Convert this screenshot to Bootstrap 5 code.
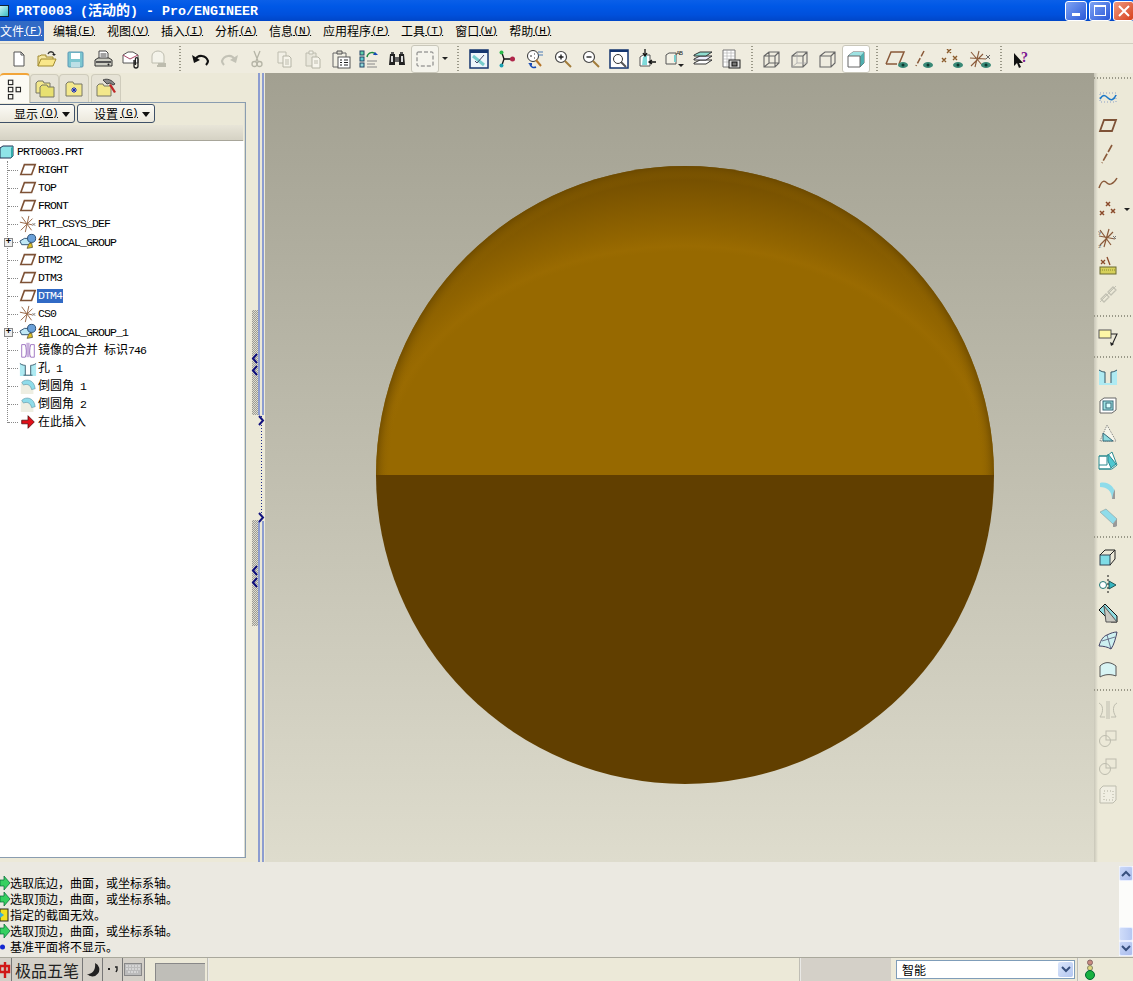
<!DOCTYPE html>
<html lang="zh">
<head>
<meta charset="utf-8">
<title>PRT0003</title>
<link href="https://cdn.jsdelivr.net/npm/bootstrap@5.3.0/dist/css/bootstrap.min.css" rel="stylesheet">
<style>
html,body{margin:0;height:981px;width:1133px;overflow:hidden;background:#ece9d8}
body{font-family:"Liberation Mono","Noto Sans CJK SC",monospace;font-size:11.5px;letter-spacing:-.9px;line-height:1;color:#000}
.cj{font-family:"Noto Sans CJK SC",sans-serif;font-size:12px;letter-spacing:0}
.app-shell{width:1133px;height:981px}
.ttl{height:21px;background:linear-gradient(#0a5fe8,#0058e6 30%,#0050dc 70%,#0046c8);color:#fff;font-weight:700;font-size:13.33px;letter-spacing:0;padding-left:1px}
.ttl .cj{font-size:14px}
.ttl-ico{width:12px;height:12px;margin:0 3px 0 -4px;background:linear-gradient(135deg,#d7fbfb,#39bcc2);border:1px solid #123}
.wb{width:22px;height:20px;border:1px solid #fff;border-radius:3px;background:linear-gradient(135deg,#7ea3f3,#2a58d8);margin-left:2px}
.wb.cl{background:linear-gradient(135deg,#ee9a80,#d8401c);width:21px;margin-right:-1px}
.mnu{height:22px;background:#efecdf}
.mi{padding:0 6px;height:20px}
.mi.on{background:#316ac5;color:#fff;padding:0 2px 0 0;margin-right:3px}
.mp{display:inline-block;width:18px;font-size:11px;letter-spacing:-.6px;text-decoration:underline;text-underline-offset:1px;text-align:center}
.tb{height:30px;background:#efecdf;border-top:1px solid #d2cfc0;padding-left:5px}
.sl{width:28px;height:28px;flex:none}
.sl svg{width:20px;height:20px;display:block}
.sl.wd svg{width:24px}
.sl.act{background:#fff;border:1px solid #c9c7ba;border-radius:3px}
.sl.act.pale{background:#f5f4ec}
.ddr{width:12px;height:28px;flex:none}
.ddr i{border:3px solid transparent;border-top:3px solid #222;border-bottom:0;display:block}
.rdd{position:absolute;left:30px;top:12px;border:3px solid transparent;border-top:3px solid #222;border-bottom:0}
.sp{flex:none;height:26px;position:relative}
.sp:after{content:"";display:block;margin:0 auto;width:2px;height:26px;background:repeating-linear-gradient(#9a9888 0 1px,transparent 1px 3px)}
.w14{width:14px}.w13{width:13px}.w12{width:12px}
.mainrow{height:789px}
.lft{width:247px;background:#ece9d8}
.tabs{height:29px}
.tab{height:28px;margin-top:1px;border:1px solid #cfccbc;border-bottom:0;border-radius:4px 4px 0 0;background:#e6e3d6}
.tab svg{width:22px;height:22px}
.tab.on{background:#fbfaf4;border-top:2px solid #f2a53a;height:30px;margin-top:0;width:30px;border-left:0;position:relative;z-index:2}
.pnl{height:756px;border:solid #8a9db0;border-width:1px 1px 1px 0;box-shadow:inset -1px 0 0 #dcdccf;background:#ece9d8;width:246px}
.bts{height:21px;padding-top:1px;gap:2px}
.bt{height:19px;border:1px solid #3e5068;border-radius:3px;background:linear-gradient(#fbfaf5,#ebe8dc);padding-right:4px}
.bt i{border:4px solid transparent;border-top:5px solid #111;border-bottom:0;display:block;margin-left:4px;margin-top:1px}
.bt1{width:83px;margin-left:-8px}.bt2{width:78px}
.gbar{height:16px;margin-top:1px;background:linear-gradient(#e8e5d8,#d5d2c4);border-bottom:1px solid #a8a69a;margin-right:2px}
.tree{background:#fff;flex:1;margin-right:1px;position:relative;padding-top:2px}
.rw{height:18px;position:relative}
.rw svg{width:18px;height:18px;flex:none}
.rootrow svg{width:14px;height:14px;margin-right:3px}
.kids{margin-left:7px;border-left:1px dotted #888;height:262px}
.cn{width:10px;border-top:1px dotted #888;flex:none;margin-right:1px}
.lb{padding:1px;white-space:pre}
.lb.sel{background:#316ac5;color:#fff}
.pm{position:absolute;left:-4px;top:5px;width:9px;height:9px;border:1px solid #8a8a8a;background:#eee;font-size:9px;line-height:7px;text-align:center;color:#000;font-weight:700;letter-spacing:0}
.spl{width:18px;background:#ece9d8;position:relative}
.grp{position:absolute;left:5px;width:6px;background:repeating-conic-gradient(#9c9c94 0 25%,#dedcd0 0 50%) 0 0/2px 2px}
.lnv{position:absolute;top:0;bottom:0;width:2px;background:#8d9dd0}
.dot-v{position:absolute;left:14px;top:343px;height:104px;width:1px;background:repeating-linear-gradient(#1a2a8a 0 1px,transparent 1px 3px)}
.lnv.a{left:11px}.lnv.b{left:15px}
.cvr{position:absolute;width:7px;height:11px;fill:none;stroke:#12127e;stroke-width:2}
.gapln{position:absolute;top:342px;height:106px;left:10px;width:8px;background:#ece9d8}
.cvs{width:829px;background:linear-gradient(#a2a091,#dedccd);position:relative}
.cvs svg{position:absolute;left:0;top:0;width:829px;height:789px}
.rtb{width:39px;background:linear-gradient(90deg,#c8c6b8,#ece9d8 4px);padding-top:4px}
.rsp{width:100%;background:repeating-linear-gradient(90deg,#9a9888 0 1px,transparent 1px 3px);height:2px}
.rtop{margin-bottom:5px}
.rs{height:15px;width:100%}.rs.t{height:12px}.rs.u{height:13px}
.msg{height:95px;background:#ebe9e1;position:relative;padding-top:13px}
.ml{height:16px;white-space:nowrap}
.ml svg{width:10px;height:14px;flex:none}
.sb{position:absolute;right:0;top:4px;width:14px;height:90px;background:#fcfcfa}
.sbb{height:15px;background:linear-gradient(135deg,#cad8f8,#aabcec);border:1px solid #e8eeff;border-radius:2px}
.sbb svg{width:10px;height:7px}
.sbt{height:14px;margin-top:auto;background:linear-gradient(90deg,#cfdcf9,#b6c8f2);border:1px solid #e8eeff;border-radius:2px}
.stt{height:24px;background:#ece9d8;border-top:1px solid #a9a89c}
.ime{width:145px;background:#d4d0c8;border-right:1px solid #888;height:23px}
.ime>div{border-right:1px solid #777;height:23px}
.imen{font-family:"Noto Sans CJK SC",sans-serif;font-size:16px;letter-spacing:0;color:#222;width:71px;padding-left:3px}
.ic1{width:12px}.ic2{width:20px}.ime>.ic3{width:20px;border-right:0}
.stbox{width:50px;height:18px;background:#bfbeb8;border-left:1px solid #888;border-top:1px solid #888;margin:5px 0 0 10px}
.vl{width:2px;height:23px;background:linear-gradient(90deg,#aaa89c,#fff);margin-left:2px}
.vl.nom{margin-left:0}
.sgr{width:90px;height:23px;background:#d4d0c8}
.cbo{width:179px;height:19px;margin-left:5px;margin-top:2px;border:1px solid #7f9db9;background:#fff;padding-left:5px}
.cbd{width:15px;height:15px;margin:1px;background:linear-gradient(135deg,#dbe6fb,#b3c6f0);border-radius:2px}
.cbd svg{width:10px;height:7px}
.lgt{width:54px;padding-left:5px}
.lgt svg{width:12px;height:22px}
</style>
</head>
<body>
<svg width="0" height="0" style="position:absolute">
<defs>
<symbol id="new" viewBox="0 0 20 20"><path d="M5 3h7l3 3v11H5z" fill="#fff" stroke="#555"/><path d="M12 3v3h3" fill="none" stroke="#555"/></symbol>
<symbol id="open" viewBox="0 0 20 20"><path d="M1 17V7h2l1-1h5v2h7v2" fill="#f5e7a0" stroke="#a08a30"/><path d="M1 17l3-7h15l-3 7z" fill="#f9e78a" stroke="#a08a30"/><path d="M11 5c1-3 5-3 6 0" fill="none" stroke="#333" stroke-width="1.300"/><path d="M15 5h4l-2 2z" fill="#222"/></symbol>
<symbol id="save" viewBox="0 0 20 20"><rect x="3" y="3" width="15" height="15" rx="1" fill="#7cc6d0" stroke="#5a98b5"/><rect x="6" y="4" width="9" height="6" fill="#fff"/><rect x="6" y="13" width="9" height="5" fill="#bcdfe6"/></symbol>
<symbol id="print" viewBox="0 0 20 20"><path d="M6 2h7l2 2v6H6z" fill="#fff" stroke="#444"/><path d="M7.500 5h6M7.500 7h6" stroke="#444"/><path d="M2 11l3-2h11l3 2v6H2z" fill="#cfcfc4" stroke="#333"/><rect x="3" y="12" width="15" height="2" fill="#555"/><circle cx="15.500" cy="15.500" r="1" fill="#222"/></symbol>
<symbol id="mail" viewBox="0 0 20 20"><path d="M2 6l5-3h5l5 3v8H2z" fill="#fff" stroke="#555"/><path d="M2 6l7 4 8-4" fill="none" stroke="#a46"/><path d="M13 11v6a2 2 0 0 0 4 0V10a1.300 1.300 0 0 0-2.600 0v6" fill="none" stroke="#222" stroke-width="1.300"/></symbol>
<symbol id="mail2" viewBox="0 0 20 20"><path d="M3 7a6 5 0 0 1 12 0v7H3z" fill="#f4f3ea" stroke="#bdbcae"/><path d="M9 15h8M8 17h9" stroke="#bdbcae" stroke-width="2"/></symbol>
<symbol id="undo" viewBox="0 0 20 20"><path d="M4 11c3-6 11-5 13 1 0 2-1 3-2 4" fill="none" stroke="#111" stroke-width="2.200"/><path d="M1 6l2 8 6-3z" fill="#111"/></symbol>
<symbol id="redo" viewBox="0 0 20 20"><path d="M16 11c-3-6-11-5-13 1 0 2 1 3 2 4" fill="none" stroke="#c3c2b6" stroke-width="2.200"/><path d="M19 6l-2 8-6-3z" fill="#c3c2b6"/></symbol>
<symbol id="cut" viewBox="0 0 20 20"><path d="M7 2l4 10M13 2L9 12" stroke="#b5b4a6" stroke-width="1.300" fill="none"/><circle cx="7.500" cy="15" r="2.500" fill="none" stroke="#b5b4a6" stroke-width="1.300"/><circle cx="12.500" cy="15" r="2.500" fill="none" stroke="#b5b4a6" stroke-width="1.300"/></symbol>
<symbol id="copy" viewBox="0 0 20 20"><path d="M3 3h8v11H3z" fill="#f2f0e6" stroke="#bdbcae"/><path d="M8 7h6l2 2v9H8z" fill="#f6f4ea" stroke="#b5b4a6"/><path d="M10 11h4M10 13h4M10 15h4" stroke="#bdbcae"/></symbol>
<symbol id="paste" viewBox="0 0 20 20"><path d="M3 4h10v13H3z" fill="#e8e6da" stroke="#bdbcae"/><path d="M6 2h4v3H6z" fill="#f4f3ea" stroke="#bdbcae"/><path d="M9 8h6l2 2v9H9z" fill="#f7f5ec" stroke="#b5b4a6"/><path d="M11 12h4M11 14h4" stroke="#bdbcae"/></symbol>
<symbol id="plist" viewBox="0 0 20 20"><path d="M2 4h13v14H2z" fill="#f2f0e4" stroke="#666"/><path d="M6 2h5v3H6z" fill="#dad8cc" stroke="#555"/><rect x="7" y="8" width="12" height="11" fill="#fff" stroke="#555"/><path d="M9 11h2M9 13.500h2M9 16h2M13 11h4M13 13.500h4M13 16h4" stroke="#222"/></symbol>
<symbol id="regen" viewBox="0 0 20 20"><rect x="1" y="2" width="4" height="4" fill="#5fd0a8" stroke="#246"/><rect x="1" y="8" width="4" height="4" fill="#5fd0d0" stroke="#246"/><rect x="1" y="14" width="4" height="4" fill="#8fd8d8" stroke="#246"/><path d="M8 8c1-5 7-6 9-2" fill="none" stroke="#1f8a3f" stroke-width="1.500"/><path d="M16 3l3 3h-5z" fill="#1448b8"/><path d="M8 12h10M8 15h8M8 18h10" stroke="#888"/></symbol>
<symbol id="bino" viewBox="0 0 20 20"><path d="M3 5h5v11H2zM12 5h5l1 11h-6z" fill="#222"/><path d="M8 8h4v5H8z" fill="#666"/><path d="M4 7h2v6H4zM14 7h2v6h-2z" fill="#ddd"/><path d="M4 3h3v2H4zM13 3h3v2h-3z" fill="#555"/></symbol>
<symbol id="selb" viewBox="0 0 20 20"><rect x="2" y="3" width="16" height="14" rx="1" fill="none" stroke="#777" stroke-dasharray="4 2"/></symbol>
<symbol id="rep" viewBox="0 0 20 20"><rect x="1" y="1" width="18" height="18" fill="#eef5fa" stroke="#14356f" stroke-width="1.500"/><rect x="1" y="1" width="18" height="3" fill="#14356f"/><path d="M4 7l11 9" stroke="#7cc" stroke-width="3"/><path d="M15 6l-7 8-2-2" fill="none" stroke="#446"/></symbol>
<symbol id="tree" viewBox="0 0 20 20"><path d="M5 4l2 6-2 6M7 10h8" fill="none" stroke="#111" stroke-width="1.300"/><circle cx="4.500" cy="3.500" r="2" fill="#2db84a"/><circle cx="4.500" cy="16.500" r="2" fill="#1a9fb0"/><circle cx="15.500" cy="10" r="2.500" fill="#b0264a"/></symbol>
<symbol id="spin" viewBox="0 0 20 20"><circle cx="8" cy="7" r="5.500" fill="#fff" stroke="#333"/><path d="M5 7h2M9 5h1M9 9h1" stroke="#333"/><path d="M13 3h5M13 6h5" stroke="#4a7bb5"/><path d="M11 11l5 6" stroke="#b5752a" stroke-width="2"/><path d="M5 15a4 4 0 0 0 6 3" fill="none" stroke="#1448b8" stroke-width="1.500"/><path d="M3 14h4v3z" fill="#1448b8"/></symbol>
<symbol id="zin" viewBox="0 0 20 20"><circle cx="8" cy="8" r="5.500" fill="#fff" stroke="#444" stroke-width="1.200"/><path d="M5.500 8h5M8 5.500v5" stroke="#222" stroke-width="1.400"/><path d="M12 12l6 6" stroke="#a27c3a" stroke-width="2"/></symbol>
<symbol id="zout" viewBox="0 0 20 20"><circle cx="8" cy="8" r="5.500" fill="#fff" stroke="#444" stroke-width="1.200"/><path d="M5.500 8h5" stroke="#222" stroke-width="1.400"/><path d="M12 12l6 6" stroke="#a27c3a" stroke-width="2"/></symbol>
<symbol id="zfit" viewBox="0 0 20 20"><rect x="1" y="1" width="18" height="18" fill="#fff" stroke="#14356f" stroke-width="1.500"/><rect x="1" y="1" width="18" height="2" fill="#14356f"/><circle cx="9" cy="10" r="4.500" fill="#fff" stroke="#333"/><path d="M12 13l5 5" stroke="#555" stroke-width="2"/></symbol>
<symbol id="orient" viewBox="0 0 20 20"><path d="M3 8l3-2h7v11H3z" fill="#fff" stroke="#555"/><path d="M6 8l4-2v10H5z" fill="#7fdada"/><path d="M8 0v6M6 4l2 3 2-3" fill="none" stroke="#111" stroke-width="1.300"/><path d="M12 13h7M15 11l-3 2 3 2" fill="none" stroke="#111" stroke-width="1.300"/></symbol>
<symbol id="ab" viewBox="0 0 20 20"><path d="M1 6l3-2h7v11H1z" fill="#f4f2e6" stroke="#555"/><rect x="9" y="6" width="2" height="7" fill="#7cc"/><text x="11" y="6" font-size="6" font-family="Liberation Sans" fill="#222">AB</text><path d="M13 15h6l-3 3z" fill="#222"/></symbol>
<symbol id="layer" viewBox="0 0 20 20"><path d="M1 14l6-3h12l-6 4H1z" fill="#fff" stroke="#333"/><path d="M1 10l6-3h12l-6 4H1z" fill="#eef" stroke="#333"/><path d="M1 6l6-3h12l-6 4H1z" fill="#8fdcd0" stroke="#333"/></symbol>
<symbol id="vtab" viewBox="0 0 20 20"><path d="M2 1h12v17H2z" fill="#fff" stroke="#777"/><path d="M2 4h12M2 7h12M2 10h12M2 13h12M6 1v17M10 1v17" stroke="#aaa" stroke-width=".6"/><rect x="8" y="11" width="11" height="8" fill="#ddd" stroke="#222"/><rect x="11" y="13" width="5" height="4" fill="#777" stroke="#111"/></symbol>
<symbol id="wf1" viewBox="0 0 20 20"><path d="M2 7l5-4h10v11l-4 4H2zM2 7h11v11M13 7l4-4M2 18l5-4h10M7 3v11" fill="none" stroke="#666" stroke-width="1.100"/></symbol>
<symbol id="wf2" viewBox="0 0 20 20"><path d="M2 7l5-4h10v11l-4 4H2zM2 7h11v11M13 7l4-4" fill="none" stroke="#666" stroke-width="1.100"/><path d="M2 18l5-4h10M7 3v11" fill="none" stroke="#aaa" stroke-width=".8"/></symbol>
<symbol id="wf3" viewBox="0 0 20 20"><path d="M2 7l5-4h10v11l-4 4H2zM2 7h11v11M13 7l4-4" fill="none" stroke="#666" stroke-width="1.100"/></symbol>
<symbol id="shd" viewBox="0 0 20 20"><path d="M2 7l5-4h11v11l-4 4H2z" fill="#fff" stroke="#666"/><path d="M2 7l5-4h11l-4 4z" fill="#9fe3e3"/><path d="M14 7l4-4v11l-4 4z" fill="#4fb0b0"/><path d="M2 7h12v11" fill="none" stroke="#666"/></symbol>
<symbol id="pl" viewBox="0 0 20 20"><path d="M2 15L6 4h12l-4 11z" fill="none" stroke="#7e5236" stroke-width="1.800"/></symbol>
<symbol id="pl-e" viewBox="0 0 24 20"><path d="M1 15L6 3h13l-5 12" fill="none" stroke="#8a5a3a" stroke-width="1.500"/><path d="M1 15h11" stroke="#8a5a3a" stroke-width="1.500"/><ellipse cx="18" cy="16" rx="5" ry="3" fill="#3a8a78"/><circle cx="18" cy="16" r="1.500" fill="#0d3a30"/></symbol>
<symbol id="ax-e" viewBox="0 0 24 20"><path d="M11 2L3 17" stroke="#8a5a3a" stroke-width="1.500" stroke-dasharray="6 2"/><ellipse cx="15" cy="16" rx="5" ry="3" fill="#3a8a78"/><circle cx="15" cy="16" r="1.500" fill="#0d3a30"/></symbol>
<symbol id="pt-e" viewBox="0 0 24 20"><path d="M6 0l4 4m0-4L6 4M1 9l4 4m0-4l-4 4M12 7l4 4m0-4l-4 4" stroke="#8a5a2a" stroke-width="1.400"/><ellipse cx="17" cy="16" rx="5" ry="3" fill="#3a8a78"/><circle cx="17" cy="16" r="1.500" fill="#0d3a30"/></symbol>
<symbol id="cs-e" viewBox="0 0 24 20"><path d="M10 2L6 18M1 9l16 1M2 3l11 13M2 17L14 5" stroke="#8a5a3a" stroke-width="1.100"/><ellipse cx="17" cy="16" rx="5" ry="3" fill="#3a8a78"/><circle cx="17" cy="16" r="1.500" fill="#0d3a30"/><path d="M17 6l4 4m0-4l-4 4" stroke="#666"/></symbol>
<symbol id="hlp" viewBox="0 0 20 20"><path d="M3 4v13l3-3 2 5 2-1-2-4h4z" fill="#111"/><text x="10" y="13" font-size="14" font-weight="700" font-family="Liberation Serif" fill="#7a1090">?</text></symbol>
<symbol id="csy" viewBox="0 0 20 20"><path d="M11 1L7 19M1 8l14 3M3 2l11 15M2 17L15 4" stroke="#9a6a4a" stroke-width="1.100"/><path d="M15 9l3 3m0-3l-3 3" stroke="#777"/></symbol>
<symbol id="grp" viewBox="0 0 20 20"><path d="M1 9l5-3h7v7H3z" fill="#bfe8f5" stroke="#246"/><circle cx="14" cy="6" r="4.500" fill="#6aa0d8" stroke="#246"/><path d="M9 17l2-5 3-1 1 5z" fill="#e0c020" stroke="#664"/></symbol>
<symbol id="mir" viewBox="0 0 20 20"><path d="M9 2v16M11 2v16" stroke="#9a6fc0"/><path d="M7 4H3v14h4C9 14 8 8 7 4zM13 4h4v14h-4C11 14 12 8 13 4z" fill="none" stroke="#9a6fc0"/></symbol>
<symbol id="hol" viewBox="0 0 20 20"><path d="M1 5c3 2 4 2 6 2v11h6V7c2 0 3 0 6-2v14H1z" fill="#aeeaf2"/><path d="M1 5c3 2 5 2 6 2v11M19 5c-3 2-5 2-6 2v11M5 18h10" fill="none" stroke="#356"/></symbol>
<symbol id="rnd" viewBox="0 0 20 20"><path d="M2 19V8c2-5 12-5 14 4v7z" fill="#eeeee2"/><path d="M3 6c5-5 14-3 15 7l-4 1c-1-5-5-7-9-5z" fill="#8fdcea" stroke="#5a8a9a" stroke-width=".6"/></symbol>
<symbol id="ins" viewBox="0 0 20 20"><path d="M3 8h7V3l7 7-7 7v-5H3z" fill="#e0101a" stroke="#400" stroke-width=".8"/></symbol>
<symbol id="rcv" viewBox="0 0 20 20"><path d="M2 5h16v9H2z" fill="none" stroke="#8aa0c8" stroke-dasharray="1 2"/><path d="M2 11c3-5 5-4 8-1s6 2 8-3" fill="none" stroke="#1c78c8" stroke-width="1.600"/></symbol>
<symbol id="crv" viewBox="0 0 20 20"><path d="M1 16c3-9 6-7 8-5s6 2 10-5" fill="none" stroke="#8a5a3a" stroke-width="1.500"/></symbol>
<symbol id="ln" viewBox="0 0 20 20"><path d="M14 1L4 19" stroke="#8a5a3a" stroke-width="1.600" stroke-dasharray="8 2"/></symbol>
<symbol id="pts" viewBox="0 0 20 20"><path d="M8 2l4 4m0-4L8 6M2 11l4 4m0-4l-4 4M13 9l4 4m0-4l-4 4" stroke="#8a4a2a" stroke-width="1.500"/></symbol>
<symbol id="csr" viewBox="0 0 20 20"><path d="M11 1L6 19M1 8l16 3M2 2l11 15M2 17L15 4" stroke="#8a5a3a" stroke-width="1.200"/><path d="M15 8l3 3m0-3l-3 3" stroke="#777"/><text x="0" y="6" font-size="6" fill="#555">y</text><text x="0" y="20" font-size="6" fill="#555">z</text></symbol>
<symbol id="anl" viewBox="0 0 20 20"><path d="M3 4l4 4m0-4L3 8M9 1l3 8" stroke="#8a4a2a" stroke-width="1.300"/><rect x="2" y="11" width="16" height="7" fill="#d6d05a" stroke="#6a6a30"/><path d="M2 14h16" stroke="#8a8a30" stroke-dasharray="1 1"/></symbol>
<symbol id="chn" viewBox="0 0 20 20"><path d="M3 15l5-5 3 3-5 5zM10 8l5-5 3 3-5 5z" fill="none" stroke="#c2c1b3" stroke-width="1.300"/><path d="M2 18L18 2" stroke="#c2c1b3"/></symbol>
<symbol id="note" viewBox="0 0 20 20"><rect x="1" y="3" width="12" height="8" fill="#fdf7a6" stroke="#555"/><path d="M13 7h6l-5 11" fill="none" stroke="#222" stroke-width="1.100"/><path d="M12 15l1 4 3-2z" fill="#222"/></symbol>
<symbol id="hole2" viewBox="0 0 20 20"><path d="M1 3c3 2 4 2 6 2v11h6V5c2 0 3 0 6-2v15H1z" fill="#aeeaf2"/><path d="M1 3c3 2 5 2 6 2v11M19 3c-3 2-5 2-6 2v11" fill="none" stroke="#356"/></symbol>
<symbol id="shell" viewBox="0 0 20 20"><path d="M2 6l4-3h12v12l-4 3H2z" fill="#fff" stroke="#666"/><rect x="5" y="6" width="10" height="9" fill="#9fe3e3" stroke="#367"/><rect x="8" y="8" width="5" height="5" fill="#dff" stroke="#367"/></symbol>
<symbol id="rib" viewBox="0 0 20 20"><path d="M2 18L9 2l9 16z" fill="#f6f5ea" stroke="#777" stroke-dasharray="1 1"/><path d="M5 10l10 8H5z" fill="#8fdce0" stroke="#367"/></symbol>
<symbol id="swp" viewBox="0 0 20 20"><path d="M1 14V5h8l5-4 5 13-5 4H1z" fill="#fff" stroke="#2a8a90"/><path d="M10 3l8 10-5 4-3-7z" fill="#4fc7d0" stroke="#2a8a90"/><path d="M1 5h8v9H1M1 18h12" fill="none" stroke="#2a8a90"/></symbol>
<symbol id="rf1" viewBox="0 0 20 20"><path d="M2 4c8-2 16 4 15 13l-3 3c0-8-5-12-12-12z" fill="#8fdcea"/><path d="M17 10v10l-3 0c1-4 1-6 3-10z" fill="#999"/></symbol>
<symbol id="rf2" viewBox="0 0 20 20"><path d="M2 5l6-3 11 10-4 5z" fill="#8fdcea" stroke="#8a9a9a" stroke-width=".6"/><path d="M19 12v7l-4 2v-4z" fill="#999"/></symbol>
<symbol id="xf" viewBox="0 0 20 20"><rect x="2" y="8" width="10" height="10" fill="#7fdce6" stroke="#345"/><path d="M12 8l5-5M2 8l5-5h10v9l-5 6" fill="none" stroke="#222"/></symbol>
<symbol id="revm" viewBox="0 0 20 20"><path d="M10 0v20" stroke="#111" stroke-dasharray="2 2"/><circle cx="5" cy="10" r="3.500" fill="#fff" stroke="#277"/><path d="M11 6l7 4-7 4z" fill="#35b5c0" stroke="#255"/></symbol>
<symbol id="chmf" viewBox="0 0 20 20"><path d="M1 7l6-6 12 12v6h-6z" fill="#8fdce0" stroke="#111"/><path d="M6 3l13 16H8z" fill="#c8c8c0" stroke="#555"/></symbol>
<symbol id="srf" viewBox="0 0 20 20"><path d="M1 15C3 8 6 5 9 4c4-2 7-3 10-3-1 5-3 13-6 17-3-2-8-3-12-3z" fill="#cdf0f0" stroke="#446"/><path d="M4 10l13-4M9 4l4 14" stroke="#446" stroke-width=".7"/></symbol>
<symbol id="srf2" viewBox="0 0 20 20"><path d="M2 18V7c5-5 11-4 16 0v10c-5-2-11-2-16 1z" fill="#d8f4f4" stroke="#555"/></symbol>
<symbol id="mir2" viewBox="0 0 20 20"><path d="M9 1v18M11 1v18" stroke="#bdbcae"/><path d="M1 3c4 2 5 8 1 14h5M19 3c-4 2-5 8-1 14h-5" fill="none" stroke="#bdbcae"/></symbol>
<symbol id="cpy" viewBox="0 0 20 20"><circle cx="7" cy="13" r="5.500" fill="none" stroke="#bdbcae"/><rect x="8" y="3" width="10" height="9" fill="none" stroke="#bdbcae"/></symbol>
<symbol id="pat" viewBox="0 0 20 20"><path d="M2 5l3-3h13v14l-3 3H2z" fill="#f0eee2" stroke="#bdbcae"/><path d="M6 7h9v9H6z" fill="none" stroke="#b0af9f" stroke-dasharray="1 2"/></symbol>
<symbol id="nodes" viewBox="0 0 20 20"><g fill="none" stroke="#222" stroke-width="1"><rect x="4" y="2" width="4" height="4"/><rect x="4" y="8.500" width="4" height="4"/><rect x="4" y="15" width="4" height="4"/><rect x="11" y="8.500" width="4" height="4"/></g></symbol>
<symbol id="fld" viewBox="0 0 22 22"><path d="M2 5l2-2h5l1 2h6v10H2z" fill="#f3e88c" stroke="#776"/><path d="M6 9l2-2h5l1 2h6v10H6z" fill="#e8e070" stroke="#776"/></symbol>
<symbol id="fld2" viewBox="0 0 22 22"><path d="M3 6l2-2h5l1 2h8v12H3z" fill="#f3e88c" stroke="#776"/><path d="M11 9v6M8 12h6M9 10l4 4m0-4l-4 4" stroke="#1228c0"/></symbol>
<symbol id="fld3" viewBox="0 0 22 22"><path d="M2 8l2-2h4l1 2h7v10H2z" fill="#f3e88c" stroke="#776"/><path d="M8 2c4-2 9 0 12 4l-2 1-3-2-3 1z" fill="#888" stroke="#444"/><path d="M16 6l5 8-2 1-5-8z" fill="#c02828"/></symbol>
<symbol id="cube" viewBox="0 0 14 14"><path d="M0 3l3-2h10v10l-2 2H0z" fill="#8fe4e8" stroke="#235"/><path d="M11 3l2-2v10l-2 2z" fill="#3aa"/></symbol>
</defs>
</svg>
<div class="app-shell d-flex flex-column">
  <div class="ttl d-flex align-items-center"><span class="ttl-ico"></span><span style="margin-left:4px">PRT0003 (<span class="cj">活动的</span>) - Pro/ENGINEER</span>
    <div class="ms-auto d-flex"><div class="wb d-flex align-items-end justify-content-center pb-1"><svg width="8" height="3"><rect width="8" height="3" fill="#fff"/></svg></div><div class="wb d-flex align-items-center justify-content-center"><svg width="12" height="11"><rect x=".5" y=".5" width="11" height="10" fill="none" stroke="#fff"/><rect width="12" height="2" fill="#fff"/></svg></div><div class="wb cl d-flex align-items-center justify-content-center"><svg width="12" height="12"><path d="M1 1l10 10M11 1L1 11" stroke="#fff" stroke-width="2"/></svg></div></div></div>
  <div class="mnu d-flex align-items-start">
    <div class="mi on d-flex align-items-center"><span class="cj">文件</span><span class="mp">(F)</span></div>
    <div class="mi d-flex align-items-center"><span class="cj">编辑</span><span class="mp">(E)</span></div>
    <div class="mi d-flex align-items-center"><span class="cj">视图</span><span class="mp">(V)</span></div>
    <div class="mi d-flex align-items-center"><span class="cj">插入</span><span class="mp">(I)</span></div>
    <div class="mi d-flex align-items-center"><span class="cj">分析</span><span class="mp">(A)</span></div>
    <div class="mi d-flex align-items-center"><span class="cj">信息</span><span class="mp">(N)</span></div>
    <div class="mi d-flex align-items-center"><span class="cj">应用程序</span><span class="mp">(P)</span></div>
    <div class="mi d-flex align-items-center"><span class="cj">工具</span><span class="mp">(T)</span></div>
    <div class="mi d-flex align-items-center"><span class="cj">窗口</span><span class="mp">(W)</span></div>
    <div class="mi d-flex align-items-center"><span class="cj">帮助</span><span class="mp">(H)</span></div>
  </div>
  <div class="tb d-flex align-items-center">
    <div class="sl d-flex align-items-center justify-content-center"><svg><use href="#new"/></svg></div>
    <div class="sl d-flex align-items-center justify-content-center"><svg><use href="#open"/></svg></div>
    <div class="sl d-flex align-items-center justify-content-center"><svg><use href="#save"/></svg></div>
    <div class="sl d-flex align-items-center justify-content-center"><svg><use href="#print"/></svg></div>
    <div class="sl d-flex align-items-center justify-content-center"><svg><use href="#mail"/></svg></div>
    <div class="sl d-flex align-items-center justify-content-center"><svg><use href="#mail2"/></svg></div>
    <div class="sp w14"></div>
    <div class="sl d-flex align-items-center justify-content-center"><svg><use href="#undo"/></svg></div>
    <div class="sl d-flex align-items-center justify-content-center"><svg><use href="#redo"/></svg></div>
    <div class="sl d-flex align-items-center justify-content-center"><svg><use href="#cut"/></svg></div>
    <div class="sl d-flex align-items-center justify-content-center"><svg><use href="#copy"/></svg></div>
    <div class="sl d-flex align-items-center justify-content-center"><svg><use href="#paste"/></svg></div>
    <div class="sl d-flex align-items-center justify-content-center"><svg><use href="#plist"/></svg></div>
    <div class="sl d-flex align-items-center justify-content-center"><svg><use href="#regen"/></svg></div>
    <div class="sl d-flex align-items-center justify-content-center"><svg><use href="#bino"/></svg></div>
    <div class="sl act pale d-flex align-items-center justify-content-center"><svg><use href="#selb"/></svg></div>
    <div class="ddr d-flex align-items-center justify-content-center"><i></i></div>
    <div class="sp w14"></div>
    <div class="sl d-flex align-items-center justify-content-center"><svg><use href="#rep"/></svg></div>
    <div class="sl d-flex align-items-center justify-content-center"><svg><use href="#tree"/></svg></div>
    <div class="sl d-flex align-items-center justify-content-center"><svg><use href="#spin"/></svg></div>
    <div class="sl d-flex align-items-center justify-content-center"><svg><use href="#zin"/></svg></div>
    <div class="sl d-flex align-items-center justify-content-center"><svg><use href="#zout"/></svg></div>
    <div class="sl d-flex align-items-center justify-content-center"><svg><use href="#zfit"/></svg></div>
    <div class="sl d-flex align-items-center justify-content-center"><svg><use href="#orient"/></svg></div>
    <div class="sl d-flex align-items-center justify-content-center"><svg><use href="#ab"/></svg></div>
    <div class="sl d-flex align-items-center justify-content-center"><svg><use href="#layer"/></svg></div>
    <div class="sl d-flex align-items-center justify-content-center"><svg><use href="#vtab"/></svg></div>
    <div class="sp w13"></div>
    <div class="sl d-flex align-items-center justify-content-center"><svg><use href="#wf1"/></svg></div>
    <div class="sl d-flex align-items-center justify-content-center"><svg><use href="#wf2"/></svg></div>
    <div class="sl d-flex align-items-center justify-content-center"><svg><use href="#wf3"/></svg></div>
    <div class="sl act d-flex align-items-center justify-content-center"><svg><use href="#shd"/></svg></div>
    <div class="sp w13"></div>
    <div class="sl wd d-flex align-items-center justify-content-center"><svg><use href="#pl-e"/></svg></div>
    <div class="sl wd d-flex align-items-center justify-content-center"><svg><use href="#ax-e"/></svg></div>
    <div class="sl wd d-flex align-items-center justify-content-center"><svg><use href="#pt-e"/></svg></div>
    <div class="sl wd d-flex align-items-center justify-content-center"><svg><use href="#cs-e"/></svg></div>
    <div class="sp w12"></div>
    <div class="sl d-flex align-items-center justify-content-center"><svg><use href="#hlp"/></svg></div>
  </div>
  <div class="mainrow d-flex">
    <div class="lft d-flex flex-column">
      <div class="tabs d-flex">
        <div class="tab on d-flex align-items-center justify-content-center"><svg><use href="#nodes"/></svg></div>
        <div class="tab d-flex align-items-center justify-content-center" style="width:29px"><svg><use href="#fld"/></svg></div>
        <div class="tab d-flex align-items-center justify-content-center" style="width:30px"><svg><use href="#fld2"/></svg></div>
        <div class="tab d-flex align-items-center justify-content-center" style="width:30px;margin-left:2px"><svg><use href="#fld3"/></svg></div>
      </div>
      <div class="pnl d-flex flex-column">
        <div class="bts d-flex">
          <div class="bt bt1 d-flex align-items-center justify-content-end"><span class="cj">显示</span><span class="mp" style="margin-left:2px">(O)</span><i></i></div>
          <div class="bt bt2 d-flex align-items-center justify-content-end"><span class="cj">设置</span><span class="mp" style="margin-left:2px">(G)</span><i></i></div>
        </div>
        <div class="gbar"></div>
        <div class="tree">
          <div class="rw rootrow d-flex align-items-center"><svg><use href="#cube"/></svg><span>PRT0003.PRT</span></div>
          <div class="kids">
            <div class="rw d-flex align-items-center"><span class="cn"></span><svg><use href="#pl"/></svg><span class="lb">RIGHT</span></div>
            <div class="rw d-flex align-items-center"><span class="cn"></span><svg><use href="#pl"/></svg><span class="lb">TOP</span></div>
            <div class="rw d-flex align-items-center"><span class="cn"></span><svg><use href="#pl"/></svg><span class="lb">FRONT</span></div>
            <div class="rw d-flex align-items-center"><span class="cn"></span><svg><use href="#csy"/></svg><span class="lb">PRT_CSYS_DEF</span></div>
            <div class="rw d-flex align-items-center"><span class="pm">+</span><span class="cn"></span><svg><use href="#grp"/></svg><span class="lb"><span class="cj">组</span>LOCAL_GROUP</span></div>
            <div class="rw d-flex align-items-center"><span class="cn"></span><svg><use href="#pl"/></svg><span class="lb">DTM2</span></div>
            <div class="rw d-flex align-items-center"><span class="cn"></span><svg><use href="#pl"/></svg><span class="lb">DTM3</span></div>
            <div class="rw d-flex align-items-center"><span class="cn"></span><svg><use href="#pl"/></svg><span class="lb sel">DTM4</span></div>
            <div class="rw d-flex align-items-center"><span class="cn"></span><svg><use href="#csy"/></svg><span class="lb">CS0</span></div>
            <div class="rw d-flex align-items-center"><span class="pm">+</span><span class="cn"></span><svg><use href="#grp"/></svg><span class="lb"><span class="cj">组</span>LOCAL_GROUP_1</span></div>
            <div class="rw d-flex align-items-center"><span class="cn"></span><svg><use href="#mir"/></svg><span class="lb"><span class="cj">镜像的合并</span> <span class="cj">标识</span>746</span></div>
            <div class="rw d-flex align-items-center"><span class="cn"></span><svg><use href="#hol"/></svg><span class="lb"><span class="cj">孔</span> 1</span></div>
            <div class="rw d-flex align-items-center"><span class="cn"></span><svg><use href="#rnd"/></svg><span class="lb"><span class="cj">倒圆角</span> 1</span></div>
            <div class="rw d-flex align-items-center"><span class="cn"></span><svg><use href="#rnd"/></svg><span class="lb"><span class="cj">倒圆角</span> 2</span></div>
            <div class="rw d-flex align-items-center"><span class="cn"></span><svg><use href="#ins"/></svg><span class="lb"><span class="cj">在此插入</span></span></div>
          </div>
        </div>
      </div>
    </div>
    <div class="spl">
      <span class="lnv a"></span><span class="lnv b"></span><span class="gapln"></span><span class="dot-v"></span>
      <span class="grp" style="top:237px;height:105px"></span><span class="grp" style="top:447px;height:106px"></span>
      <svg class="cvr" style="left:4px;top:280px" viewBox="0 0 7 11"><path d="M6 1L2 5.500 6 10"/></svg>
      <svg class="cvr" style="left:4px;top:292px" viewBox="0 0 7 11"><path d="M6 1L2 5.500 6 10"/></svg>
      <svg class="cvr" style="left:4px;top:492px" viewBox="0 0 7 11"><path d="M6 1L2 5.500 6 10"/></svg>
      <svg class="cvr" style="left:4px;top:504px" viewBox="0 0 7 11"><path d="M6 1L2 5.500 6 10"/></svg>
      <svg class="cvr" style="left:11px;top:342px" viewBox="0 0 7 11"><path d="M1 1l4 4.500L1 10"/></svg>
      <svg class="cvr" style="left:11px;top:439px" viewBox="0 0 7 11"><path d="M1 1l4 4.500L1 10"/></svg>
    </div>
    <div class="cvs">
      <svg viewBox="265 73 829 789">
        <defs>
          <radialGradient id="sph2" gradientUnits="userSpaceOnUse" cx="685" cy="475" r="309">
            <stop offset="0" stop-color="#976900" stop-opacity="0"/><stop offset=".955" stop-color="#976900" stop-opacity="0"/><stop offset="1" stop-color="#6a4800" stop-opacity=".75"/>
          </radialGradient>
          <radialGradient id="sph3" gradientUnits="userSpaceOnUse" cx="0" cy="0" r="1.360" gradientTransform="translate(685 475) scale(305 228)">
            <stop offset="0" stop-color="#976900"/><stop offset=".72" stop-color="#976900"/><stop offset=".738" stop-color="#9a6b01"/><stop offset=".78" stop-color="#926500"/><stop offset="1" stop-color="#6f4b00"/>
          </radialGradient>
        </defs>
        <path d="M376 475a309 309 0 0 1 618 0z" fill="url(#sph3)"/>
        <path d="M376 475a309 309 0 0 1 618 0z" fill="url(#sph2)"/>
        <path d="M376 475a309 309 0 0 0 618 0z" fill="#613f00"/>
      </svg>
    </div>
    <div class="rtb d-flex flex-column">
      <div class="rsp rtop"></div>
      <div class="sl d-flex align-items-center justify-content-center"><svg><use href="#rcv"/></svg></div>
      <div class="sl d-flex align-items-center justify-content-center"><svg><use href="#pl"/></svg></div>
      <div class="sl d-flex align-items-center justify-content-center"><svg><use href="#ln"/></svg></div>
      <div class="sl d-flex align-items-center justify-content-center"><svg><use href="#crv"/></svg></div>
      <div class="sl d-flex align-items-center justify-content-center position-relative"><svg><use href="#pts"/></svg><i class="rdd"></i></div>
      <div class="sl d-flex align-items-center justify-content-center"><svg><use href="#csr"/></svg></div>
      <div class="sl d-flex align-items-center justify-content-center"><svg><use href="#anl"/></svg></div>
      <div class="sl d-flex align-items-center justify-content-center"><svg><use href="#chn"/></svg></div>
      <div class="rs d-flex align-items-center"><div class="rsp"></div></div>
      <div class="sl d-flex align-items-center justify-content-center"><svg><use href="#note"/></svg></div>
      <div class="rs t d-flex align-items-center"><div class="rsp"></div></div>
      <div class="sl d-flex align-items-center justify-content-center"><svg><use href="#hole2"/></svg></div>
      <div class="sl d-flex align-items-center justify-content-center"><svg><use href="#shell"/></svg></div>
      <div class="sl d-flex align-items-center justify-content-center"><svg><use href="#rib"/></svg></div>
      <div class="sl d-flex align-items-center justify-content-center"><svg><use href="#swp"/></svg></div>
      <div class="sl d-flex align-items-center justify-content-center"><svg><use href="#rf1"/></svg></div>
      <div class="sl d-flex align-items-center justify-content-center"><svg><use href="#rf2"/></svg></div>
      <div class="rs t d-flex align-items-center"><div class="rsp"></div></div>
      <div class="sl d-flex align-items-center justify-content-center"><svg><use href="#xf"/></svg></div>
      <div class="sl d-flex align-items-center justify-content-center"><svg><use href="#revm"/></svg></div>
      <div class="sl d-flex align-items-center justify-content-center"><svg><use href="#chmf"/></svg></div>
      <div class="sl d-flex align-items-center justify-content-center"><svg><use href="#srf"/></svg></div>
      <div class="sl d-flex align-items-center justify-content-center"><svg><use href="#srf2"/></svg></div>
      <div class="rs u d-flex align-items-center"><div class="rsp"></div></div>
      <div class="sl d-flex align-items-center justify-content-center"><svg><use href="#mir2"/></svg></div>
      <div class="sl d-flex align-items-center justify-content-center"><svg><use href="#cpy"/></svg></div>
      <div class="sl d-flex align-items-center justify-content-center"><svg><use href="#cpy"/></svg></div>
      <div class="sl d-flex align-items-center justify-content-center"><svg><use href="#pat"/></svg></div>
    </div>
  </div>
  <div class="msg">
    <div class="ml d-flex align-items-center"><svg viewBox="0 0 10 14"><path d="M0 4h4V0l6 7-6 7v-4H0z" fill="#35d060" stroke="#063" stroke-width=".7"/></svg><span class="cj">选取底边，曲面，或坐标系轴。</span></div>
    <div class="ml d-flex align-items-center"><svg viewBox="0 0 10 14"><path d="M0 4h4V0l6 7-6 7v-4H0z" fill="#35d060" stroke="#063" stroke-width=".7"/></svg><span class="cj">选取顶边，曲面，或坐标系轴。</span></div>
    <div class="ml d-flex align-items-center"><svg viewBox="0 0 10 14"><rect x="0" y="1" width="8" height="12" fill="#f3e020" stroke="#222"/><path d="M0 4l4 3-4 3z" fill="#35b0e0"/></svg><span class="cj">指定的截面无效。</span></div>
    <div class="ml d-flex align-items-center"><svg viewBox="0 0 10 14"><path d="M0 4h4V0l6 7-6 7v-4H0z" fill="#35d060" stroke="#063" stroke-width=".7"/></svg><span class="cj">选取顶边，曲面，或坐标系轴。</span></div>
    <div class="ml d-flex align-items-center"><svg viewBox="0 0 10 14"><circle cx="2.500" cy="7" r="2.500" fill="#1428d0"/></svg><span class="cj">基准平面将不显示。</span></div>
    <div class="sb d-flex flex-column">
      <div class="sbb d-flex align-items-center justify-content-center"><svg viewBox="0 0 10 7"><path d="M1 6l4-4 4 4" fill="none" stroke="#37507e" stroke-width="2"/></svg></div>
      <div class="sbt"></div>
      <div class="sbb d-flex align-items-center justify-content-center"><svg viewBox="0 0 10 7"><path d="M1 1l4 4 4-4" fill="none" stroke="#37507e" stroke-width="2"/></svg></div>
    </div>
  </div>
  <div class="stt d-flex">
    <div class="ime d-flex align-items-center">
      <div class="ic1 d-flex align-items-center"><svg width="11" height="20" viewBox="0 0 11 20"><path d="M0 6h9v6H0zM5 2v16" fill="none" stroke="#d01818" stroke-width="2.400"/></svg></div>
      <div class="imen d-flex align-items-center">极品五笔</div>
      <div class="ic2 d-flex align-items-center justify-content-center"><svg width="14" height="16" viewBox="0 0 14 16"><path d="M9 1a7 7 0 1 1-8 11c5 1 9-4 8-11z" fill="#222"/></svg></div>
      <div class="ic2 d-flex align-items-center justify-content-center"><svg width="12" height="10" viewBox="0 0 12 10"><rect x="1" y="3" width="2" height="2" fill="#222"/><path d="M8 2h2v3l-1 2" fill="none" stroke="#222" stroke-width="1.400"/></svg></div>
      <div class="ic3 d-flex align-items-center justify-content-center"><svg width="18" height="13" viewBox="0 0 18 13"><rect x=".5" y=".5" width="17" height="12" fill="#bbb" stroke="#888"/><path d="M2 3h14M2 6h14M4 9h10" stroke="#eee" stroke-dasharray="2 1"/></svg></div>
    </div>
    <div class="stbox"></div>
    <div class="vl"></div>
    <div class="flex-grow-1"></div>
    <div class="vl nom"></div>
    <div class="sgr"></div>
    <div class="cbo d-flex align-items-center justify-content-between"><span class="cj">智能</span><div class="cbd d-flex align-items-center justify-content-center"><svg viewBox="0 0 10 7"><path d="M1 1l4 4 4-4" fill="none" stroke="#37507e" stroke-width="2"/></svg></div></div>
    <div class="vl"></div>
    <div class="lgt d-flex align-items-center"><svg viewBox="0 0 12 22"><circle cx="6" cy="3.500" r="2.500" fill="#c88a80" stroke="#866"/><circle cx="6" cy="9" r="2.500" fill="#e0d880" stroke="#886"/><circle cx="6" cy="16" r="4.500" fill="#18b040" stroke="#063"/></svg></div>
  </div>
</div>
</body>
</html>
